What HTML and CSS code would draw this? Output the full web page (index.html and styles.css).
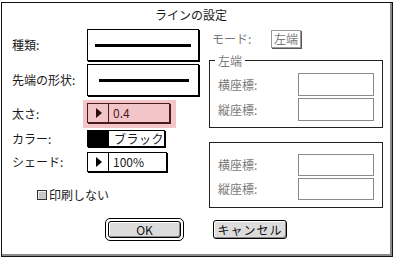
FILE: index.html
```html
<!DOCTYPE html>
<html lang="ja">
<head>
    <meta charset="UTF-8">
    <meta name="viewport" content="width=device-width, initial-scale=1.0">
    <title>ラインの設定</title>
    <link rel="stylesheet" href="styles.css">
</head>
<body>
<div class="window">
    <div class="title">ラインの設定</div>

    <div class="content">
        <div class="left">
            <div class="row row-kind">
                <span class="label">種類:</span>
                <div class="linebox"><span class="stroke"></span></div>
            </div>
            <div class="row row-cap">
                <span class="label">先端の形状:</span>
                <div class="linebox linebox-cap"><span class="stroke"></span></div>
            </div>
            <div class="row row-width">
                <span class="label">太さ:</span>
                <div class="highlight">
                    <div class="popup popup-active">
                        <span class="arrow"><span class="tri"></span></span>
                        <span class="value">0.4</span>
                    </div>
                </div>
            </div>
            <div class="row row-color">
                <span class="label">カラー:</span>
                <div class="popup popup-color">
                    <span class="swatch"></span>
                    <span class="value">ブラック</span>
                </div>
            </div>
            <div class="row row-shade">
                <span class="label">シェード:</span>
                <div class="popup popup-shade">
                    <span class="arrow"><span class="tri"></span></span>
                    <span class="value">100%</span>
                </div>
            </div>
            <label class="check">
                <span class="box"></span>
                <span>印刷しない</span>
            </label>
        </div>

        <div class="right">
            <div class="mode">
                <span class="mode-label">モード:</span>
                <span class="mode-box">左端</span>
            </div>

            <div class="group group-top">
                <span class="legend">左端</span>
                <div class="field">
                    <span>横座標:</span>
                    <span class="input"></span>
                </div>
                <div class="field">
                    <span>縦座標:</span>
                    <span class="input"></span>
                </div>
            </div>

            <div class="group group-bottom">
                <div class="field">
                    <span>横座標:</span>
                    <span class="input"></span>
                </div>
                <div class="field">
                    <span>縦座標:</span>
                    <span class="input"></span>
                </div>
            </div>
        </div>
    </div>

    <div class="buttons">
        <div class="default-ring"><button class="btn btn-ok">OK</button></div>
        <button class="btn btn-cancel">キャンセル</button>
    </div>
</div>
</body>
</html>
```

FILE: styles.css
```css
body {
    margin: 0;
    background: #fff;
    font-family: "Noto Sans CJK JP", "Noto Sans", sans-serif;
    font-size: 12px;
    color: #1a1a1a;
}

.window {
    box-sizing: border-box;
    width: 392px;
    height: 255px;
    margin: 2px 0 0 1px;
    border: 1px solid #111;
    box-shadow: inset -2px -2px 0 #8c8c8c;
    background: #fff;
}

.title {
    height: 22px;
    line-height: 23px;
    text-align: center;
    padding-right: 12px;
}

.content {
    display: flex;
    height: 183px;
}

/* left column */

.left {
    width: 207px;
    box-sizing: border-box;
    padding-left: 10px;
}

.row {
    display: flex;
    align-items: center;
}

.label {
    width: 75px;
    flex: none;
    line-height: 1;
}

.row-kind  { margin-top: 4px; height: 32px; }
.row-cap   { margin-top: 3px; height: 32px; }
.row-width { margin-top: 4px; height: 28px; }
.row-color { margin-top: 2px; height: 17px; }
.row-shade { margin-top: 5px; height: 20px; }

.linebox {
    box-sizing: border-box;
    width: 112px;
    height: 32px;
    border: 1px solid #000;
    box-shadow: 1px 1px 0 #000;
    display: flex;
    align-items: center;
    padding: 0 7px;
    margin-right: 1px;
}

.linebox-cap {
    padding: 0 9px 0 11px;
}

.stroke {
    display: block;
    height: 3px;
    width: 100%;
    background: #000;
}

.highlight {
    box-sizing: border-box;
    height: 28px;
    margin-left: -4px;
    padding: 3px 6px 0 4px;
    background: #f2c6c9;
}

.popup {
    box-sizing: border-box;
    display: flex;
    align-items: stretch;
    border: 1px solid #000;
    box-shadow: 1px 1px 0 #000;
    background: #fff;
    white-space: nowrap;
}

.popup-active {
    width: 83px;
    height: 20px;
    border-color: #4a1a1e;
    box-shadow: 1px 1px 0 #4a1a1e;
    background: #f2c6c9;
    color: #4a1a1e;
}

.popup-color {
    width: 78px;
    height: 17px;
}

.popup-shade {
    width: 80px;
    height: 20px;
}

.arrow {
    width: 20px;
    flex: none;
    border-right: 1px solid currentColor;
    display: flex;
    align-items: center;
    justify-content: center;
}

.popup-shade .arrow {
    border-right-color: #000;
}

.tri {
    width: 0;
    height: 0;
    border-top: 5px solid transparent;
    border-bottom: 5px solid transparent;
    border-left: 6px solid #2a0c0e;
    margin-left: 2px;
}

.popup-shade .tri {
    border-left-color: #000;
}

.value {
    display: flex;
    align-items: center;
    padding-left: 4px;
    line-height: 1;
}

.swatch {
    width: 21px;
    flex: none;
    background: #000;
}

.popup-color .value {
    padding-left: 5px;
    letter-spacing: 0.5px;
}

.check {
    display: flex;
    align-items: center;
    gap: 2px;
    margin-top: 18px;
    margin-left: 25px;
    height: 10px;
    line-height: 1;
}

.check .box {
    box-sizing: border-box;
    width: 10px;
    height: 10px;
    border: 1px solid #333;
    background: #c8c8c8;
    box-shadow: inset 1px 1px 0 #eee;
}

/* right column */

.right {
    width: 174px;
    color: #7a7a7a;
}

.mode {
    display: flex;
    align-items: center;
    margin-top: 5px;
    height: 17px;
    padding-left: 3px;
}

.mode-label {
    width: 59px;
    line-height: 1;
}

.mode-box {
    box-sizing: border-box;
    width: 30px;
    height: 18px;
    border: 1px solid #9a9a9a;
    box-shadow: 1px 1px 0 #555;
    display: flex;
    align-items: center;
    justify-content: center;
    line-height: 1;
}

.group {
    position: relative;
    box-sizing: border-box;
    border: 1px solid #222;
    padding: 0 8px;
    display: flex;
    flex-direction: column;
    gap: 2px;
}

.group-top {
    margin-top: 13px;
    height: 68px;
    padding-top: 12px;
}

.group-bottom {
    margin-top: 14px;
    height: 66px;
    padding-top: 11px;
}

.legend {
    position: absolute;
    top: -7px;
    left: 5px;
    padding: 0 3px;
    background: #fff;
    line-height: 14px;
}

.field {
    display: flex;
    justify-content: space-between;
    align-items: center;
    line-height: 1;
}

.input {
    box-sizing: border-box;
    width: 76px;
    height: 23px;
    border: 1px solid #8a8a8a;
}

.group-bottom .input {
    height: 22px;
}

/* buttons */

.buttons {
    display: flex;
    align-items: center;
    margin-top: 10px;
    padding-left: 103px;
}

.default-ring {
    box-sizing: border-box;
    width: 79px;
    height: 23px;
    border: 1px solid #000;
    border-radius: 5px;
    padding: 2px;
    display: flex;
}

.btn {
    font-family: inherit;
    font-size: 12px;
    color: #111;
    background: #dcdcdc;
    border: 1px solid #000;
    border-radius: 3px;
    box-shadow: inset 1px 1px 0 #fff, inset -1px -1px 0 #888;
    padding: 0;
    line-height: 1;
}

.btn-ok {
    flex: 1;
}

.btn-cancel {
    width: 74px;
    height: 19px;
    margin-left: 29px;
    letter-spacing: 1px;
}
```
